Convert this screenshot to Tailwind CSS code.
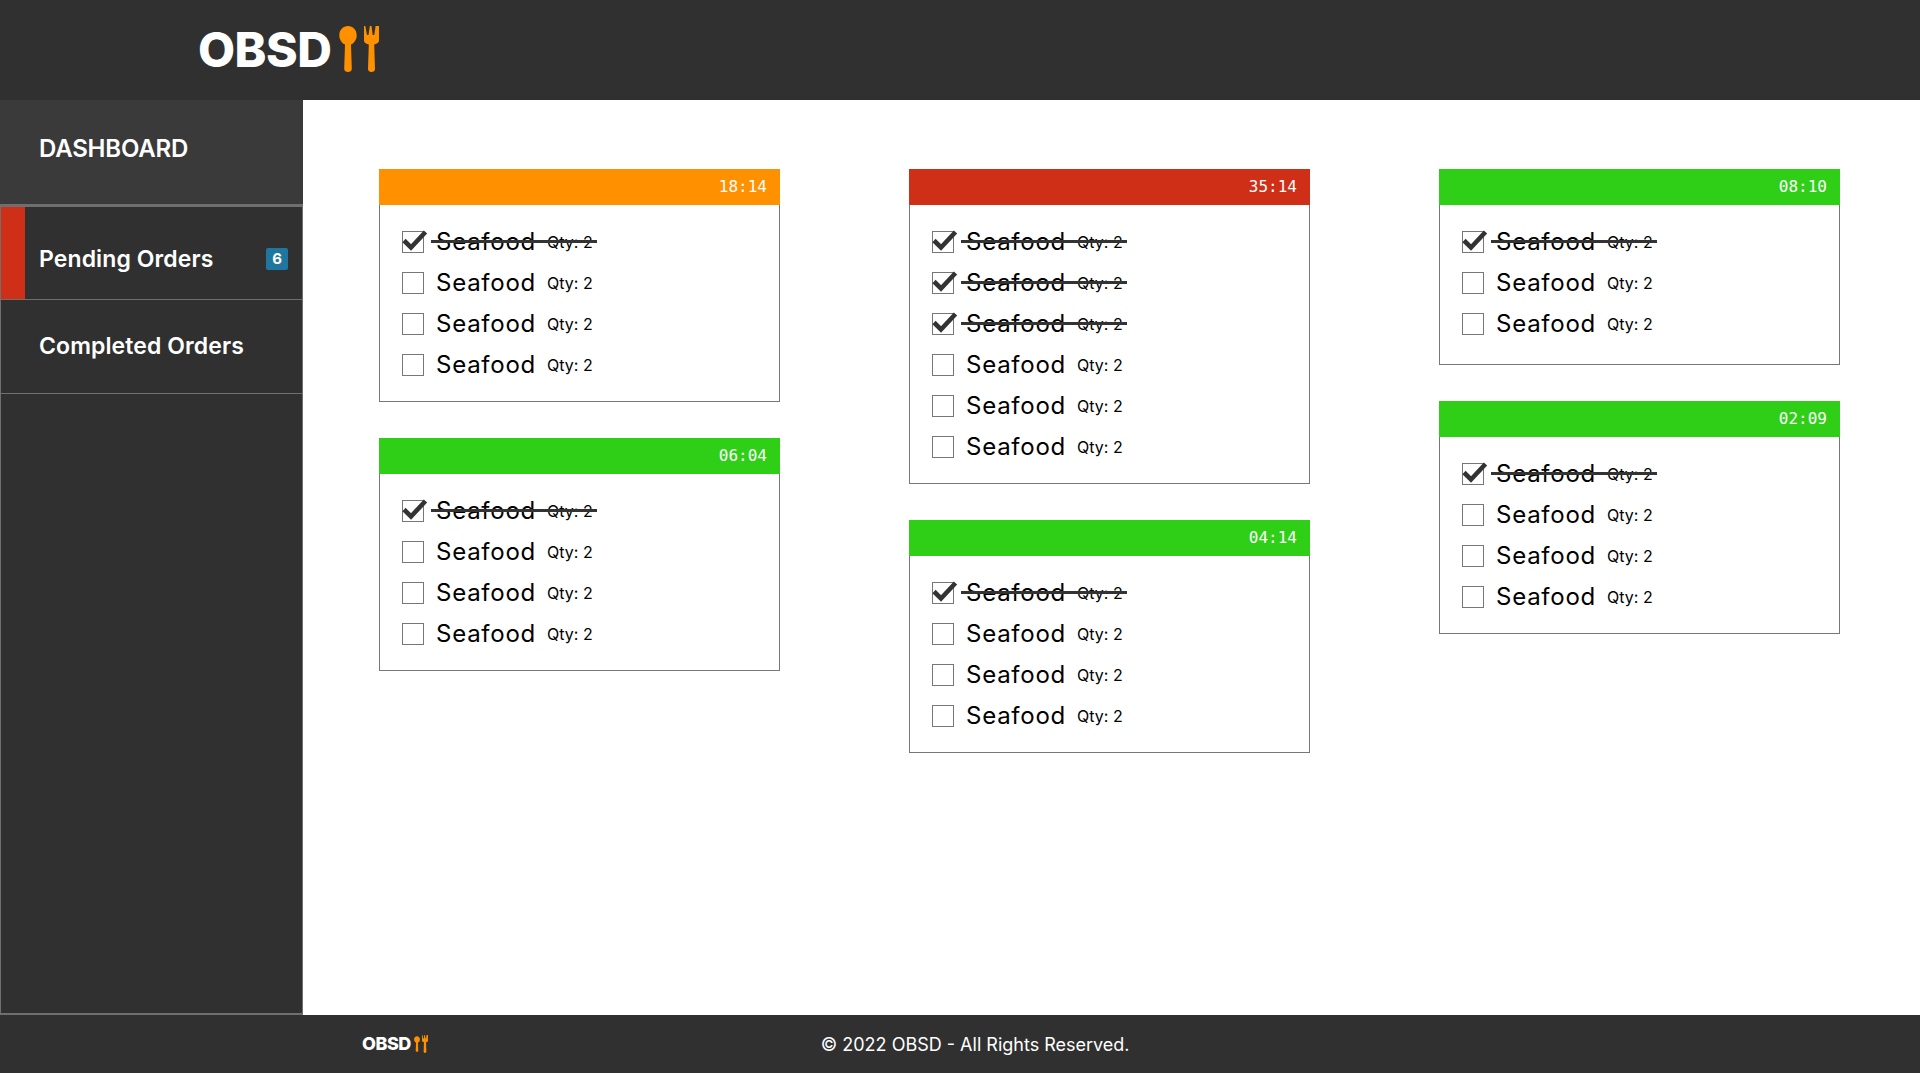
<!DOCTYPE html>
<html lang="en"><head><meta charset="utf-8"><title>OBSD</title>
<script src="https://cdn.jsdelivr.net/npm/@tailwindcss/browser@4"></script></head>
<body class="font-['Inter','Liberation_Sans',sans-serif] bg-white">
<svg class="hidden"><defs>
<symbol id="spoon" viewBox="0 0 18 46"><path fill="#ff9100" d="M9 0C4 0 .3 4 .3 9.2c0 4.600 2.700 8 5.700 9.200L5.200 43c0 1.700 1.700 3 3.800 3s3.800-1.300 3.800-3L12 18.400c3-1.200 5.700-4.600 5.700-9.200C17.700 4 14 0 9 0z"/></symbol>
<symbol id="fork" viewBox="0 0 15 46"><path fill="#ff9100" d="M0 0l1.300 0 1.700 9 1.500 0L5.800 0h1.700l1.200 9 1.600 0 1.300-9L15 0v14.500c0 1.800-1.500 3-3.400 3.500l-1.400.5L11 43c0 1.700-1.500 3-3.500 3S4 44.700 4 43l.8-24.500-1.500-.5C1.400 17.400 0 16.200 0 14.500z"/></symbol>
<symbol id="check" viewBox="0 0 26 22"><path fill="none" stroke="#333" stroke-width="4.600" d="M2 10.500l7 7L23.500 2"/></symbol>
</defs></svg>
<div class="flex flex-col h-[1073px] w-[1920px] overflow-hidden">
  <header class="h-[100px] bg-[#303030] flex items-center pl-[198px] shrink-0">
    <span class="text-white font-extrabold text-[48px] leading-none tracking-[-0.5px]">OBSD</span>
    <svg class="w-[18px] h-[46px] ml-[8px] mt-[-2px]"><use href="#spoon"/></svg>
    <svg class="w-[15px] h-[46px] ml-[7px] mt-[-2px]"><use href="#fork"/></svg>
  </header>
  <div class="flex flex-1 min-h-0">
    <aside class="w-[303px] shrink-0 bg-[#303030] text-white flex flex-col border-b-2 border-[#6f6f6f]">
      <div class="h-[107px] bg-[#3a3a3a] border-b-[3px] border-[#6f6f6f] flex items-center pl-[39px] pb-[6px] font-semibold text-[24px] tracking-[-0.2px]">DASHBOARD</div>
      <div class="flex-1 border-x border-[#6f6f6f] flex flex-col">
        <div class="h-[93px] border-b border-[#6f6f6f] flex">
          <div class="w-[24px] bg-[#cf2f16]"></div>
          <div class="flex-1 flex items-center justify-between pl-[14px] pr-[14px] pt-[12px]">
            <span class="font-semibold text-[23px] tracking-[0.1px]">Pending Orders</span>
            <span class="w-[22px] h-[22px] rounded-[2px] bg-[#1f77a0] flex items-center justify-center text-[15px] font-bold">6</span>
          </div>
        </div>
        <div class="h-[94px] border-b border-[#6f6f6f] flex items-center pl-[38px]">
          <span class="font-semibold text-[23px] tracking-[0.1px]">Completed Orders</span>
        </div>
      </div>
    </aside>
    <main class="flex-1 bg-white pt-[69px] pl-[76px] grid grid-cols-[401px_401px_401px] gap-x-[129px] items-start">
      <div class="flex flex-col gap-[36px]">
        <section>
          <div class="h-[36px] bg-[#ff9100] text-white font-['DejaVu_Sans_Mono',monospace] text-[16px] flex items-center justify-end pr-[13px]">18:14</div>
          <div class="border border-t-0 border-[#777] pl-[22px] py-[16px] min-h-[160px]">
            <div class="h-[41px] flex items-center"><span class="relative w-[22px] h-[22px] border border-[#777] shrink-0"><svg class="absolute left-[-1px] top-[-2px] w-[26px] h-[22px]"><use href="#check"/></svg></span><span class="relative flex items-center ml-[12px]"><span class="absolute left-[-5px] right-[-4px] top-[calc(50%-1.500px)] h-[3px] bg-[#333]"></span><span class="w-[111px] text-[24px] tracking-[0.75px]">Seafood</span><span class="text-[16px]">Qty: 2</span></span></div>
            <div class="h-[41px] flex items-center"><span class="w-[22px] h-[22px] border border-[#777] shrink-0"></span><span class="flex items-center ml-[12px]"><span class="w-[111px] text-[24px] tracking-[0.75px]">Seafood</span><span class="text-[16px]">Qty: 2</span></span></div>
            <div class="h-[41px] flex items-center"><span class="w-[22px] h-[22px] border border-[#777] shrink-0"></span><span class="flex items-center ml-[12px]"><span class="w-[111px] text-[24px] tracking-[0.75px]">Seafood</span><span class="text-[16px]">Qty: 2</span></span></div>
            <div class="h-[41px] flex items-center"><span class="w-[22px] h-[22px] border border-[#777] shrink-0"></span><span class="flex items-center ml-[12px]"><span class="w-[111px] text-[24px] tracking-[0.75px]">Seafood</span><span class="text-[16px]">Qty: 2</span></span></div>
          </div>
        </section>
        <section>
          <div class="h-[36px] bg-[#2ecf16] text-white font-['DejaVu_Sans_Mono',monospace] text-[16px] flex items-center justify-end pr-[13px]">06:04</div>
          <div class="border border-t-0 border-[#777] pl-[22px] py-[16px] min-h-[160px]">
            <div class="h-[41px] flex items-center"><span class="relative w-[22px] h-[22px] border border-[#777] shrink-0"><svg class="absolute left-[-1px] top-[-2px] w-[26px] h-[22px]"><use href="#check"/></svg></span><span class="relative flex items-center ml-[12px]"><span class="absolute left-[-5px] right-[-4px] top-[calc(50%-1.500px)] h-[3px] bg-[#333]"></span><span class="w-[111px] text-[24px] tracking-[0.75px]">Seafood</span><span class="text-[16px]">Qty: 2</span></span></div>
            <div class="h-[41px] flex items-center"><span class="w-[22px] h-[22px] border border-[#777] shrink-0"></span><span class="flex items-center ml-[12px]"><span class="w-[111px] text-[24px] tracking-[0.75px]">Seafood</span><span class="text-[16px]">Qty: 2</span></span></div>
            <div class="h-[41px] flex items-center"><span class="w-[22px] h-[22px] border border-[#777] shrink-0"></span><span class="flex items-center ml-[12px]"><span class="w-[111px] text-[24px] tracking-[0.75px]">Seafood</span><span class="text-[16px]">Qty: 2</span></span></div>
            <div class="h-[41px] flex items-center"><span class="w-[22px] h-[22px] border border-[#777] shrink-0"></span><span class="flex items-center ml-[12px]"><span class="w-[111px] text-[24px] tracking-[0.75px]">Seafood</span><span class="text-[16px]">Qty: 2</span></span></div>
          </div>
        </section>
      </div>
      <div class="flex flex-col gap-[36px]">
        <section>
          <div class="h-[36px] bg-[#cf2f16] text-white font-['DejaVu_Sans_Mono',monospace] text-[16px] flex items-center justify-end pr-[13px]">35:14</div>
          <div class="border border-t-0 border-[#777] pl-[22px] py-[16px] min-h-[160px]">
            <div class="h-[41px] flex items-center"><span class="relative w-[22px] h-[22px] border border-[#777] shrink-0"><svg class="absolute left-[-1px] top-[-2px] w-[26px] h-[22px]"><use href="#check"/></svg></span><span class="relative flex items-center ml-[12px]"><span class="absolute left-[-5px] right-[-4px] top-[calc(50%-1.500px)] h-[3px] bg-[#333]"></span><span class="w-[111px] text-[24px] tracking-[0.75px]">Seafood</span><span class="text-[16px]">Qty: 2</span></span></div>
            <div class="h-[41px] flex items-center"><span class="relative w-[22px] h-[22px] border border-[#777] shrink-0"><svg class="absolute left-[-1px] top-[-2px] w-[26px] h-[22px]"><use href="#check"/></svg></span><span class="relative flex items-center ml-[12px]"><span class="absolute left-[-5px] right-[-4px] top-[calc(50%-1.500px)] h-[3px] bg-[#333]"></span><span class="w-[111px] text-[24px] tracking-[0.75px]">Seafood</span><span class="text-[16px]">Qty: 2</span></span></div>
            <div class="h-[41px] flex items-center"><span class="relative w-[22px] h-[22px] border border-[#777] shrink-0"><svg class="absolute left-[-1px] top-[-2px] w-[26px] h-[22px]"><use href="#check"/></svg></span><span class="relative flex items-center ml-[12px]"><span class="absolute left-[-5px] right-[-4px] top-[calc(50%-1.500px)] h-[3px] bg-[#333]"></span><span class="w-[111px] text-[24px] tracking-[0.75px]">Seafood</span><span class="text-[16px]">Qty: 2</span></span></div>
            <div class="h-[41px] flex items-center"><span class="w-[22px] h-[22px] border border-[#777] shrink-0"></span><span class="flex items-center ml-[12px]"><span class="w-[111px] text-[24px] tracking-[0.75px]">Seafood</span><span class="text-[16px]">Qty: 2</span></span></div>
            <div class="h-[41px] flex items-center"><span class="w-[22px] h-[22px] border border-[#777] shrink-0"></span><span class="flex items-center ml-[12px]"><span class="w-[111px] text-[24px] tracking-[0.75px]">Seafood</span><span class="text-[16px]">Qty: 2</span></span></div>
            <div class="h-[41px] flex items-center"><span class="w-[22px] h-[22px] border border-[#777] shrink-0"></span><span class="flex items-center ml-[12px]"><span class="w-[111px] text-[24px] tracking-[0.75px]">Seafood</span><span class="text-[16px]">Qty: 2</span></span></div>
          </div>
        </section>
        <section>
          <div class="h-[36px] bg-[#2ecf16] text-white font-['DejaVu_Sans_Mono',monospace] text-[16px] flex items-center justify-end pr-[13px]">04:14</div>
          <div class="border border-t-0 border-[#777] pl-[22px] py-[16px] min-h-[160px]">
            <div class="h-[41px] flex items-center"><span class="relative w-[22px] h-[22px] border border-[#777] shrink-0"><svg class="absolute left-[-1px] top-[-2px] w-[26px] h-[22px]"><use href="#check"/></svg></span><span class="relative flex items-center ml-[12px]"><span class="absolute left-[-5px] right-[-4px] top-[calc(50%-1.500px)] h-[3px] bg-[#333]"></span><span class="w-[111px] text-[24px] tracking-[0.75px]">Seafood</span><span class="text-[16px]">Qty: 2</span></span></div>
            <div class="h-[41px] flex items-center"><span class="w-[22px] h-[22px] border border-[#777] shrink-0"></span><span class="flex items-center ml-[12px]"><span class="w-[111px] text-[24px] tracking-[0.75px]">Seafood</span><span class="text-[16px]">Qty: 2</span></span></div>
            <div class="h-[41px] flex items-center"><span class="w-[22px] h-[22px] border border-[#777] shrink-0"></span><span class="flex items-center ml-[12px]"><span class="w-[111px] text-[24px] tracking-[0.75px]">Seafood</span><span class="text-[16px]">Qty: 2</span></span></div>
            <div class="h-[41px] flex items-center"><span class="w-[22px] h-[22px] border border-[#777] shrink-0"></span><span class="flex items-center ml-[12px]"><span class="w-[111px] text-[24px] tracking-[0.75px]">Seafood</span><span class="text-[16px]">Qty: 2</span></span></div>
          </div>
        </section>
      </div>
      <div class="flex flex-col gap-[36px]">
        <section>
          <div class="h-[36px] bg-[#2ecf16] text-white font-['DejaVu_Sans_Mono',monospace] text-[16px] flex items-center justify-end pr-[13px]">08:10</div>
          <div class="border border-t-0 border-[#777] pl-[22px] py-[16px] min-h-[160px]">
            <div class="h-[41px] flex items-center"><span class="relative w-[22px] h-[22px] border border-[#777] shrink-0"><svg class="absolute left-[-1px] top-[-2px] w-[26px] h-[22px]"><use href="#check"/></svg></span><span class="relative flex items-center ml-[12px]"><span class="absolute left-[-5px] right-[-4px] top-[calc(50%-1.500px)] h-[3px] bg-[#333]"></span><span class="w-[111px] text-[24px] tracking-[0.75px]">Seafood</span><span class="text-[16px]">Qty: 2</span></span></div>
            <div class="h-[41px] flex items-center"><span class="w-[22px] h-[22px] border border-[#777] shrink-0"></span><span class="flex items-center ml-[12px]"><span class="w-[111px] text-[24px] tracking-[0.75px]">Seafood</span><span class="text-[16px]">Qty: 2</span></span></div>
            <div class="h-[41px] flex items-center"><span class="w-[22px] h-[22px] border border-[#777] shrink-0"></span><span class="flex items-center ml-[12px]"><span class="w-[111px] text-[24px] tracking-[0.75px]">Seafood</span><span class="text-[16px]">Qty: 2</span></span></div>
          </div>
        </section>
        <section>
          <div class="h-[36px] bg-[#2ecf16] text-white font-['DejaVu_Sans_Mono',monospace] text-[16px] flex items-center justify-end pr-[13px]">02:09</div>
          <div class="border border-t-0 border-[#777] pl-[22px] py-[16px] min-h-[160px]">
            <div class="h-[41px] flex items-center"><span class="relative w-[22px] h-[22px] border border-[#777] shrink-0"><svg class="absolute left-[-1px] top-[-2px] w-[26px] h-[22px]"><use href="#check"/></svg></span><span class="relative flex items-center ml-[12px]"><span class="absolute left-[-5px] right-[-4px] top-[calc(50%-1.500px)] h-[3px] bg-[#333]"></span><span class="w-[111px] text-[24px] tracking-[0.75px]">Seafood</span><span class="text-[16px]">Qty: 2</span></span></div>
            <div class="h-[41px] flex items-center"><span class="w-[22px] h-[22px] border border-[#777] shrink-0"></span><span class="flex items-center ml-[12px]"><span class="w-[111px] text-[24px] tracking-[0.75px]">Seafood</span><span class="text-[16px]">Qty: 2</span></span></div>
            <div class="h-[41px] flex items-center"><span class="w-[22px] h-[22px] border border-[#777] shrink-0"></span><span class="flex items-center ml-[12px]"><span class="w-[111px] text-[24px] tracking-[0.75px]">Seafood</span><span class="text-[16px]">Qty: 2</span></span></div>
            <div class="h-[41px] flex items-center"><span class="w-[22px] h-[22px] border border-[#777] shrink-0"></span><span class="flex items-center ml-[12px]"><span class="w-[111px] text-[24px] tracking-[0.75px]">Seafood</span><span class="text-[16px]">Qty: 2</span></span></div>
          </div>
        </section>
      </div>
    </main>
  </div>
  <footer class="h-[58px] bg-[#303030] text-white flex items-center pl-[362px] shrink-0">
    <span class="font-extrabold text-[18px] leading-none tracking-[-0.5px]">OBSD</span>
    <svg class="w-[6px] h-[18px] ml-[3px]"><use href="#spoon"/></svg>
    <svg class="w-[6px] h-[18px] ml-[2px]"><use href="#fork"/></svg>
    <span class="ml-[393px] text-[18px]">© 2022 OBSD - All Rights Reserved.</span>
  </footer>
</div>
</body></html>
